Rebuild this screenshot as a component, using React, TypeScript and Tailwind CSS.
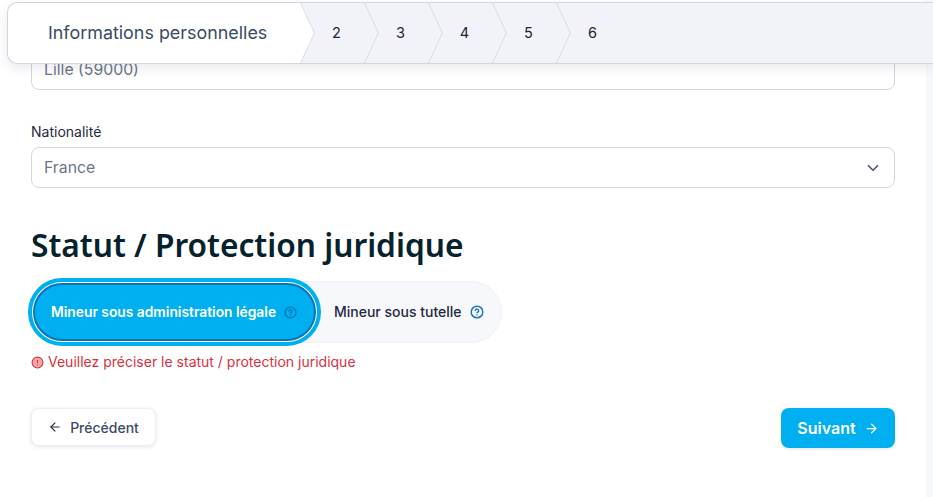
import { ArrowLeft, ArrowRight, ChevronDown, CircleAlert, CircleHelp } from "lucide-react";

const steps = ["2", "3", "4", "5", "6"];

function Chevron({ fill }: { fill: string }) {
	return (
		<svg
			className="absolute top-0 -right-[15px] z-10 h-[60px] w-[16px]"
			viewBox="0 0 16 60"
			fill="none"
		>
			<path d="M0.5 0 L14.5 30 L0.5 60 Z" fill={fill} />
			<path d="M0.5 0 L14.5 30 L0.5 60" stroke="#d9dbe6" strokeWidth="1" />
		</svg>
	);
}

function Stepper() {
	return (
		<div className="absolute top-[2px] left-[7px] right-0 z-20 flex h-[62px] rounded-l-[10px] border-y border-l border-[#d3d5e3] bg-[#f1f3f8] shadow-[0_4px_12px_rgba(30,40,70,0.10)]">
			<div className="relative flex w-[293px] items-center rounded-l-[10px] bg-white pl-[40px] text-[17.9px] text-[#3d4a63]">
				Informations personnelles
				<Chevron fill="#ffffff" />
			</div>
			{steps.map((step, i) => (
				<div
					key={step}
					className="relative flex w-[64px] items-center justify-center pl-[7px] text-[14.5px] text-[#1d2433]"
				>
					{step}
					{i < steps.length - 1 && <Chevron fill="#f1f3f8" />}
				</div>
			))}
		</div>
	);
}

export default function App() {
	return (
		<div className="relative flex h-[497px] w-[933px] overflow-hidden bg-white font-['Inter',sans-serif]">
			<Stepper />

			<main className="w-[926px] px-[31px] pt-[49px]">
				<div className="flex h-[41px] items-center rounded-[8px] border border-[#d3d5e3] px-3 text-[15.8px] text-[#6b7686]">
					Lille (59000)
				</div>

				<label className="mt-[32px] block text-[14px] leading-[20px] text-[#1f2a3d]">
					Nationalité
				</label>
				<div className="mt-[5px] flex h-[41px] items-center justify-between rounded-[8px] border border-[#d3d5e3] pr-[12px] pl-3 text-[15.8px] text-[#6b7686]">
					France
					<ChevronDown className="h-[18px] w-[18px] text-[#4b5568]" strokeWidth={2.2} />
				</div>

				<h2 className="mt-[35px] font-['Noto_Sans',sans-serif] text-[31.7px] leading-[44px] font-semibold text-[#04222e]">
					Statut / Protection juridique
				</h2>

				<div className="mt-[14px] flex w-fit items-center">
					<div className="flex h-[62px] items-center rounded-full border border-[#f0f1f6] bg-[#f7f8fb] pr-[17px]">
						<button className="ml-[1px] flex h-[58px] w-[283px] items-center gap-[8px] rounded-full border-2 border-[#0a74b8] bg-[#00aff0] pl-[16px] text-[13.8px] font-semibold text-white ring-1 ring-white outline-[4px] outline-offset-[1px] outline-[#00aff0]">
							Mineur sous administration légale
							<CircleHelp className="h-[13px] w-[13px] text-[#0a74b8]" strokeWidth={2.5} />
						</button>
						<span className="ml-[18px] -mt-[1px] flex items-center gap-[8px] text-[14px] font-medium text-[#1f2a3d]">
							Mineur sous tutelle
							<CircleHelp className="h-[14px] w-[14px] text-[#1a76b8]" strokeWidth={2.5} />
						</span>
					</div>
				</div>

				<p className="mt-[9px] flex items-center gap-[4px] text-[14px] leading-[20px] text-[#d6333f]">
					<CircleAlert className="h-[13px] w-[13px] fill-[#f4a6a6]" strokeWidth={2} />
					Veuillez préciser le statut / protection juridique
				</p>

				<div className="mt-[36px] flex items-start justify-between">
					<button className="flex h-[38px] w-[125px] items-center justify-center gap-[8px] rounded-[8px] border border-[#eceef3] bg-white text-[14px] font-medium text-[#3d4a63] shadow-[0_1px_4px_rgba(30,40,70,0.12)]">
						<ArrowLeft className="h-[14px] w-[14px] text-[#243042]" />
						Précédent
					</button>
					<button className="flex h-[40px] w-[114px] items-center justify-center gap-[8px] rounded-[8px] bg-[#00aff0] text-[16px] font-semibold text-white shadow-[0_1px_3px_rgba(30,40,70,0.12)]">
						Suivant
						<ArrowRight className="h-[15px] w-[15px]" />
					</button>
				</div>
			</main>

			<div className="w-[7px] bg-[#f7f8fc]" />
		</div>
	);
}
